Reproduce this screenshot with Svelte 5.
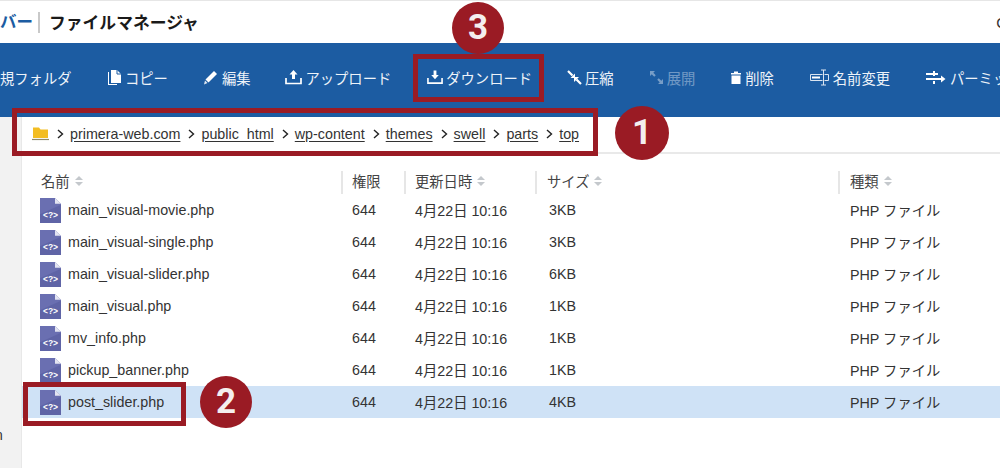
<script>
  const files = [
    { name: 'main_visual-movie.php', size: '3KB' },
    { name: 'main_visual-single.php', size: '3KB' },
    { name: 'main_visual-slider.php', size: '6KB' },
    { name: 'main_visual.php', size: '1KB' },
    { name: 'mv_info.php', size: '1KB' },
    { name: 'pickup_banner.php', size: '1KB' },
    { name: 'post_slider.php', size: '4KB', selected: true }
  ];
  const crumbs = ['primera-web.com', 'public_html', 'wp-content', 'themes', 'swell', 'parts', 'top'];
</script>

{#snippet sort()}
  <svg class="sort" viewBox="0 0 10 12" width="10" height="12"><path d="M5 1 9 5H1zM5 11 1 7H9z" fill="#c4c8cc"/></svg>
{/snippet}

<div class="page">
  <header class="top">
    <span class="brand">バー</span>
    <span class="title">ファイルマネージャ</span>
    <span class="user">C</span>
  </header>

  <nav class="tools">
    <span class="tool first">規フォルダ</span>
    <span class="tool">
      <svg width="15" height="17" viewBox="0 0 15 17"><path d="M1 3v13h9v-1H2V3z" fill="#fff"/><path d="M4 1h6l4 4v9H4z" fill="#fff"/><path d="M10 1v4h4" fill="none" stroke="#1c5ca2"/></svg>
      コピー
    </span>
    <span class="tool">
      <svg width="16" height="16" viewBox="0 0 16 16"><path d="M11 2l3 3-8.500 8.500-3-3z" fill="#fff"/><path d="M2 11.500l2.500 2.500L1 15.500z" fill="#dfe8f2"/></svg>
      編集
    </span>
    <span class="tool">
      <svg width="17" height="16" viewBox="0 0 17 16"><path d="M8.500 1l4 4.500h-2.500V10H7V5.500H4.500z" fill="#fff"/><path d="M1 9v5.500h15V9" fill="none" stroke="#fff" stroke-width="1.700"/></svg>
      アップロード
    </span>
    <span class="tool nudge">
      <svg width="16" height="16" viewBox="0 0 17 16"><path d="M7 1h3v5h2.500l-4 4.500-4-4.500H7z" fill="#fff"/><path d="M1 9v5.500h15V9" fill="none" stroke="#fff" stroke-width="1.700"/></svg>
      ダウンロード
    </span>
    <span class="tool">
      <svg width="15" height="15" viewBox="0 0 15 15"><path d="M1 1l4.500 4.500M14 14L9.500 9.500" stroke="#fff" stroke-width="2.200"/><path d="M8 3.500V8H3.500zM7 12V7h5z" fill="#fff"/></svg>
      圧縮
    </span>
    <span class="tool off">
      <svg width="15" height="15" viewBox="0 0 15 15"><path d="M3 3l3 3M12 12L9 9" stroke="#fff" stroke-width="2.200"/><path d="M1 1h5L1 6zM14 14H9l5-5z" fill="#fff"/></svg>
      展開
    </span>
    <span class="tool">
      <svg width="12" height="15" viewBox="0 0 12 15"><path d="M4 1.500h4V3h3v1.500H1V3h3zM1.500 5.500h9V14h-9z" fill="#fff"/></svg>
      削除
    </span>
    <span class="tool nudge">
      <svg width="20" height="17" viewBox="0 0 20 17"><path d="M.5 5.500h18v6H.5z" fill="none" stroke="#dbe5f1"/><path d="M2 7.500h8v2H2z" fill="#fff"/><path d="M12.500 1h2v15h-2z" fill="#1c5ca2"/><path d="M11 1h5M11 16h5M13.500 1v15" fill="none" stroke="#dbe5f1"/></svg>
      名前変更
    </span>
    <span class="tool wide nudge">
      <svg width="20" height="16" viewBox="0 0 20 16"><path d="M0 5h12M0 10h15" stroke="#fff" stroke-width="2"/><path d="M8 2v5M8 12v3" stroke="#fff" stroke-width="2"/><path d="M15 6.500l4.500 3.500-4.500 3.500z" fill="#fff"/></svg>
      パーミッション
    </span>
  </nav>

  <div class="body">
    <aside class="side"><span class="side-label">n</span></aside>
    <main class="main">
      <div class="crumbs">
        <svg width="17" height="15" viewBox="0 0 17 15"><path d="M1 1.500h6l1.500 2H16V12H1z" fill="#f3bd22"/><path d="M0 13.500h17" stroke="#8f8a6c" stroke-width="1.200"/></svg>
        {#each crumbs as c}
          <svg class="chev" width="7" height="10" viewBox="0 0 7 10"><path d="M1 1l4.500 4L1 9" fill="none" stroke="#222" stroke-width="1.400"/></svg>
          <span class="crumb">{c}</span>
        {/each}
      </div>

      <div class="row head">
        <div class="cell name">名前 {@render sort()}</div>
        <div class="cell sep">権限</div>
        <div class="cell sep">更新日時 {@render sort()}</div>
        <div class="cell sep">サイズ {@render sort()}</div>
        <div class="cell sep">種類 {@render sort()}</div>
      </div>

      {#each files as f}
        <div class="row item" class:selected={f.selected}>
          <div class="cell name">
            <svg class="php" width="21" height="25" viewBox="0 0 21 26" preserveAspectRatio="none">
              <path d="M0 0h15l6 6v20H0z" fill="#6a6fb1"/>
              <path d="M15 0v6h6z" fill="#e3e4f1"/>
              <path d="M0 26V17L21 7v19z" fill="#5f64a6"/>
              <text x="10.500" y="20.500" text-anchor="middle" class="php-t">&lt;?&gt;</text>
            </svg>
            <span class="fname">{f.name}</span>
          </div>
          <div class="cell">644</div>
          <div class="cell cjk">4月22日 10:16</div>
          <div class="cell">{f.size}</div>
          <div class="cell cjk">PHP ファイル</div>
        </div>
      {/each}
    </main>
  </div>

  <div class="mark m1"></div>
  <div class="mark m2"></div>
  <div class="mark m3"></div>
  <div class="num n1">1</div>
  <div class="num n2">2</div>
  <div class="num n3">3</div>
</div>

<style>
  :global(body) { margin: 0; }
  .page {
    position: relative;
    width: 1000px;
    height: 468px;
    overflow: hidden;
    background: #fff;
    color: #333;
    font-family: "Liberation Sans", "Noto Sans CJK JP", sans-serif;
    font-size: 14.300px;
  }
  .top {
    height: 42px;
    border-top: 1px solid #e6e6e6;
    display: flex;
    align-items: center;
    position: relative;
  }
  .brand {
    width: 29px;
    padding-right: 9px;
    margin-right: 9px;
    border-right: 2px solid #c9c9c9;
    height: 21px;
    line-height: 21px;
    font-size: 16.500px;
    font-weight: 700;
    color: #1c5ca2;
    text-align: right;
    white-space: nowrap;
    flex: none;
  }
  .title { font-size: 16.800px; font-weight: 700; color: #1a1a1a; white-space: nowrap; }
  .user { margin-left: auto; margin-right: -7px; font-size: 15px; color: #333; }
  .tools {
    height: 74px;
    box-sizing: border-box;
    padding-bottom: 6px;
    background: #1c5ca2;
    display: flex;
    align-items: center;
    gap: 35px;
    white-space: nowrap;
  }
  .tool {
    display: inline-flex;
    align-items: center;
    gap: 3px;
    font-size: 14.300px;
    color: #eef3f9;
    flex: none;
  }
  .tool.first { width: 72px; justify-content: flex-end; overflow: hidden; direction: rtl; }
  .tool.off { opacity: 0.4; }
  .tool.wide { gap: 4px; }
  .tool.nudge { margin-left: 1px; }
  .body {
    display: flex;
    height: 352px;
  }
  .side {
    width: 21px;
    background: #f2f2f2;
    border-right: 1px solid #e8e8e8;
    position: relative;
    overflow: hidden;
    flex: none;
  }
  .side-label {
    display: block;
    margin-top: 310px;
    margin-left: -5px;
    color: #333;
    font-size: 14px;
    line-height: 16px;
  }
  .main { flex: 1; min-width: 0; }
  .crumbs {
    height: 37px;
    box-sizing: border-box;
    padding-bottom: 2px;
    border-bottom: 2px solid #e9e9e9;
    display: flex;
    align-items: center;
    padding-left: 10px;
    color: #333;
  }
  .crumbs > svg:first-child { flex: none; }
  .crumb { text-decoration: underline; text-underline-offset: 2px; }
  .chev { flex: none; margin-left: 8px; margin-right: 6px; }
  .row {
    display: grid;
    grid-template-columns: 320px 63px 131px 303px 1fr;
    align-items: center;
  }
  .head {
    height: 23px;
    margin-top: 17px;
    color: #444;
  }
  .head .cell {
    height: 23px;
    box-sizing: border-box;
    padding-bottom: 4px;
    display: flex;
    align-items: center;
    gap: 3px;
  }
  .head .sep { border-left: 2px solid #e6e6e6; padding-left: 10px; margin-left: -1px; }
  .head .sep:nth-child(2), .head .sep:nth-child(3) { padding-left: 9px; }
  .head .name { padding-left: 19px; }
  .item { height: 32px; }
  .sort { flex: none; margin-left: 1px; }
  .item .cell:not(.name) { padding-left: 10px; }
  .item .cjk { padding-bottom: 2px; }
  .item .name { padding-left: 18px; display: flex; align-items: center; gap: 7px; }
  .item .cell:nth-child(4) { padding-left: 13px; }
  .item .cell:nth-child(5) { padding-left: 11px; }
  .php { flex: none; margin-top: 1px; }
  .php-t { font: 700 8.500px "Liberation Sans", sans-serif; fill: #fff; }
  .selected { background: #cfe2f6; }
  .mark {
    position: absolute;
    box-sizing: border-box;
    border: 5px solid #9a1b24;
  }
  .m1 { left: 12px; top: 108px; width: 586px; height: 48px; }
  .m2 { left: 23px; top: 382px; width: 163px; height: 44px; }
  .m3 { left: 413px; top: 54px; width: 131px; height: 48px; }
  .num {
    position: absolute;
    width: 52px;
    height: 52px;
    border-radius: 50%;
    background: #9a1b24;
    color: #f4eeee;
    font: 700 35px/52px "Roboto", "Liberation Sans", sans-serif;
    text-align: center;
  }
  .n1 { left: 615px; top: 106px; width: 54px; height: 54px; line-height: 54px; }
  .n2 { left: 200px; top: 376px; }
  .n3 { left: 452px; top: 2px; }
</style>
